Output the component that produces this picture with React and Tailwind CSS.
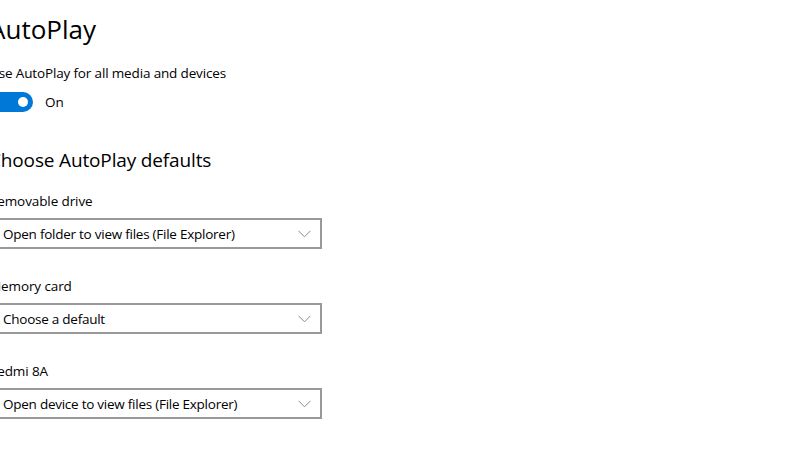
import { useState } from "react";

function Chevron() {
  return (
    <svg width="13" height="8" viewBox="0 0 13 8" className="shrink-0">
      <path d="M0.5 0.8 L6.5 6.8 L12.5 0.8" fill="none" stroke="#8a8a8a" strokeWidth="1" />
    </svg>
  );
}

function Select({ value }) {
  return (
    <div className="mt-[7px] flex h-[31px] w-[333px] items-center justify-between border-2 border-[#999999] bg-white pl-[12px] pr-[9px]">
      <span className="text-[13.5px] leading-[20px] tracking-[-0.25px] text-black">{value}</span>
      <Chevron />
    </div>
  );
}

export default function App() {
  const [on, setOn] = useState(true);

  const groups = [
    { label: "Removable drive", value: "Open folder to view files (File Explorer)" },
    { label: "Memory card", value: "Choose a default" },
    { label: "Redmi 8A", value: "Open device to view files (File Explorer)" },
  ];

  return (
    <div
      className="h-[469px] w-[800px] overflow-hidden bg-white text-black"
      style={{ fontFamily: '"Open Sans", "Noto Sans", sans-serif' }}
    >
      <div className="ml-[-11px] pt-[9px]">
        {/* TITLE */}
        <h1 className="text-[26px] font-normal leading-[40px]">AutoPlay</h1>

        {/* TOGGLE */}
        <p className="mt-[14px] text-[13.5px] leading-[20px] tracking-[-0.15px]">Use AutoPlay for all media and devices</p>
        <div className="mt-[9px] flex h-[20px] items-center gap-[12px]">
          <button
            onClick={() => setOn(!on)}
            className="flex h-[20px] w-[44px] items-center rounded-full bg-[#0078d7] pl-[29px]"
          >
            <span className="block h-[10px] w-[10px] rounded-full bg-white" />
          </button>
          <span className="text-[13.5px] leading-[20px]">{on ? "On" : "Off"}</span>
        </div>

        {/* DEFAULTS */}
        <h2 className="mt-[34px] text-[19px] font-normal leading-[28px] tracking-[-0.15px]">Choose AutoPlay defaults</h2>

        <div className="mt-[17px]">
          {groups.map((g, i) => (
            <div key={g.label} className={i > 0 ? "mt-[27px]" : ""}>
              <p className="text-[13.5px] leading-[20px] tracking-[-0.1px]">{g.label}</p>
              <Select value={g.value} />
            </div>
          ))}
        </div>
      </div>
    </div>
  );
}
